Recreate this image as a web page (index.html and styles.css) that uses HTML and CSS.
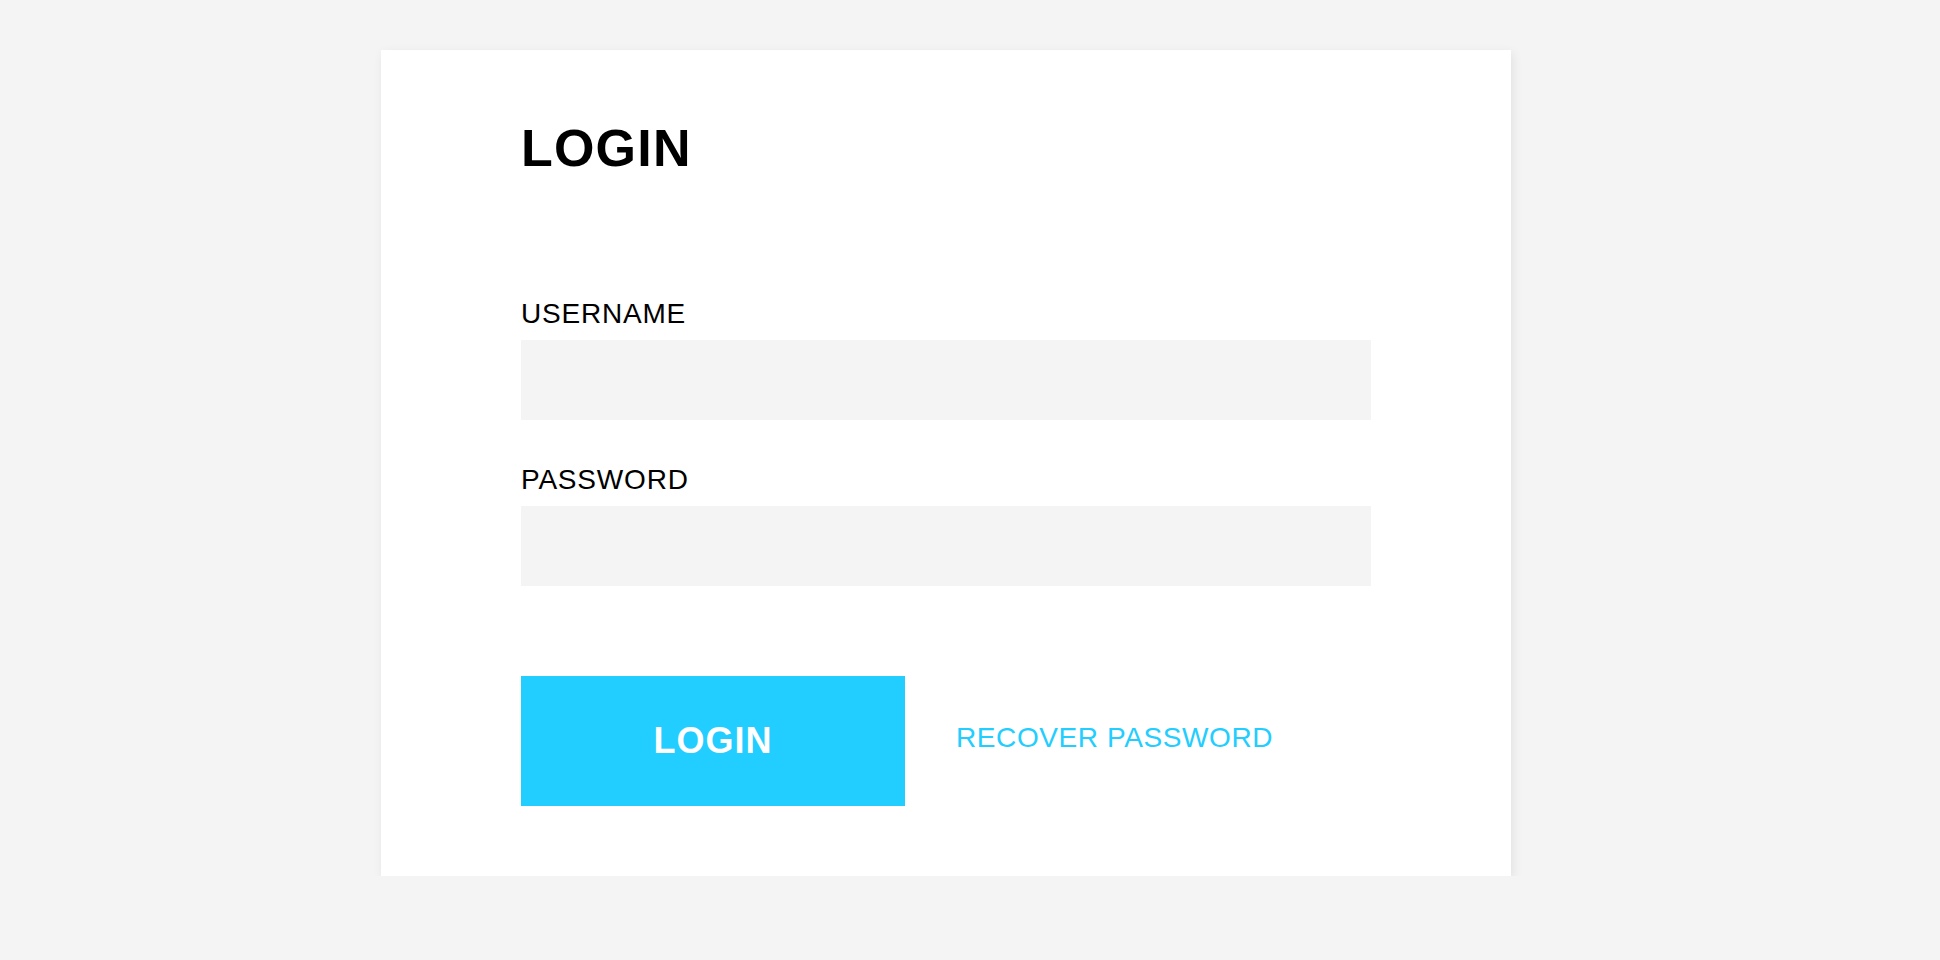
FILE: index.html
```html
<!DOCTYPE html>
<html lang="en">
<head>
  <meta charset="UTF-8" />
  <title>Login</title>
  <link rel="stylesheet" href="styles.css">
</head>
<body>
  <!-- login card -->
  <div class="card">
    <h1 class="title">LOGIN</h1>

    <form class="login-form" onsubmit="return false">
      <label class="field-label" for="username">USERNAME</label>
      <input class="field-input" id="username" type="text">

      <label class="field-label" for="password">PASSWORD</label>
      <input class="field-input" id="password" type="password">

      <div class="actions">
        <button class="login-btn" type="submit">LOGIN</button>
        <a class="recover-link" href="#">RECOVER PASSWORD</a>
      </div>
    </form>
  </div>
</body>
</html>
```

FILE: styles.css
```css
/* ---------- base ---------- */
body {
  margin: 0;
  background: #f4f4f4;
  font-family: 'Liberation Sans', Arial, sans-serif;
  color: #000;
}

/* ---------- card ---------- */
.card {
  width: 1130px;
  height: 826px;
  box-sizing: border-box;
  margin: 50px 0 0 381px;
  padding: 72px 140px 70px;
  background: #fff;
  box-shadow: 2px 3px 10px rgba(0, 0, 0, 0.08);
}

.title {
  margin: 0 0 126px;
  font-size: 52px;
  line-height: 1;
  font-weight: bold;
  letter-spacing: 1.2px;
}

/* ---------- form ---------- */
.login-form {
  display: flex;
  flex-direction: column;
}

.field-label {
  display: block;
  font-size: 28px;
  line-height: 1;
  letter-spacing: 0.8px;
  margin-bottom: 12px;
}

.field-input {
  height: 80px;
  border: none;
  outline: none;
  background: #f4f4f4;
  padding: 0 20px;
  font-size: 24px;
  box-sizing: border-box;
  margin-bottom: 46px;
}

.field-input:last-of-type {
  margin-bottom: 90px;
}

/* ---------- buttons ---------- */
.actions {
  display: flex;
  align-items: center;
  gap: 51px;
}

.login-btn {
  width: 384px;
  height: 130px;
  border: none;
  background: #22cdff;
  color: #fff;
  font-family: inherit;
  font-size: 36px;
  font-weight: bold;
  letter-spacing: 1px;
  cursor: pointer;
}

.recover-link {
  font-size: 28px;
  line-height: 1;
  color: #22cdff;
  text-decoration: none;
  letter-spacing: 0.6px;
  margin-bottom: 6px;
}
```
